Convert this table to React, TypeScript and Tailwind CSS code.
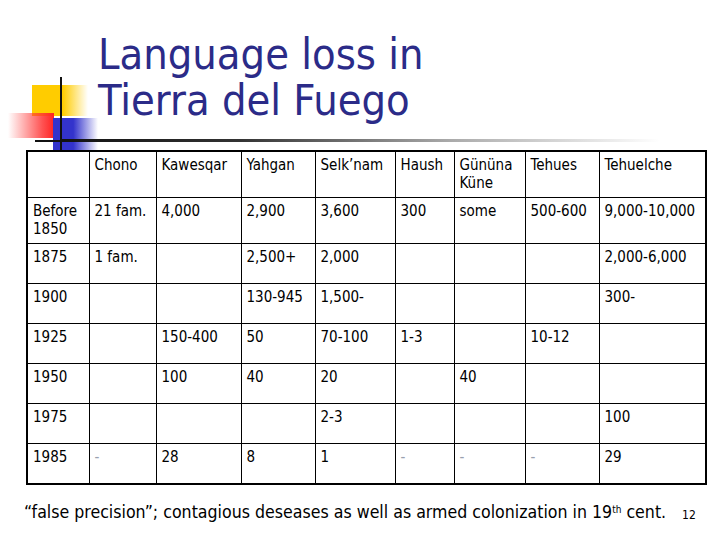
import React from "react";

const cols = [62, 67, 85, 74, 80, 59, 71, 74, 107];

const header = ["", "Chono", "Kawesqar", "Yahgan", "Selk’nam", "Haush", "Gününa Küne", "Tehues", "Tehuelche"];

const rows: { h: number; cells: string[] }[] = [
  { h: 46, cells: ["Before 1850", "21 fam.", "4,000", "2,900", "3,600", "300", "some", "500-600", "9,000-10,000"] },
  { h: 40, cells: ["1875", "1 fam.", "", "2,500+", "2,000", "", "", "", "2,000-6,000"] },
  { h: 40, cells: ["1900", "", "", "130-945", "1,500-", "", "", "", "300-"] },
  { h: 40, cells: ["1925", "", "150-400", "50", "70-100", "1-3", "", "10-12", ""] },
  { h: 40, cells: ["1950", "", "100", "40", "20", "", "40", "", ""] },
  { h: 40, cells: ["1975", "", "", "", "2-3", "", "", "", "100"] },
  { h: 41, cells: ["1985", "-", "28", "8", "1", "-", "-", "-", "29"] },
];

function Logo() {
  return (
    <svg className="absolute left-0 top-0" width="720" height="160" viewBox="0 0 720 160">
      <defs>
        <linearGradient id="yel" x1="0" x2="1" y1="0" y2="0">
          <stop offset="0" stopColor="#ffcc00" />
          <stop offset="0.55" stopColor="#ffcc00" />
          <stop offset="1" stopColor="#ffcc00" stopOpacity="0" />
        </linearGradient>
        <linearGradient id="red" x1="0" x2="1" y1="0" y2="0">
          <stop offset="0" stopColor="#ff3333" stopOpacity="0" />
          <stop offset="0.75" stopColor="#ff3333" stopOpacity="0.85" />
          <stop offset="1" stopColor="#ff2222" />
        </linearGradient>
        <linearGradient id="blu" x1="0" x2="1" y1="0" y2="0">
          <stop offset="0" stopColor="#3333cc" />
          <stop offset="0.45" stopColor="#3333cc" />
          <stop offset="1" stopColor="#3333cc" stopOpacity="0" />
        </linearGradient>
        <linearGradient id="rule" x1="0" x2="1" y1="0" y2="0">
          <stop offset="0" stopColor="#111111" />
          <stop offset="0.3" stopColor="#333333" />
          <stop offset="0.65" stopColor="#aaaaaa" />
          <stop offset="1" stopColor="#ffffff" />
        </linearGradient>
      </defs>
      <rect x="32" y="85" width="56" height="31" fill="url(#yel)" />
      <rect x="8" y="113" width="46" height="25" fill="url(#red)" />
      <rect x="53" y="118" width="45" height="32" fill="url(#blu)" />
      <rect x="60" y="77" width="2" height="75" fill="#111111" />
      <rect x="35" y="140" width="30" height="2" fill="#111111" />
      <rect x="60" y="139" width="600" height="3" fill="url(#rule)" />
    </svg>
  );
}

export default function App() {
  return (
    <div className="relative w-[720px] h-[540px] overflow-hidden bg-white font-['DejaVu_Sans_Condensed','DejaVu_Sans',sans-serif] [font-stretch:condensed]">
      <Logo />
      <div className="relative pl-[98px] pt-[31px]">
        <h1 className="text-[43px] leading-[46px] text-[#2b2b88] font-normal">
          Language loss in
          <br />
          Tierra del Fuego
        </h1>
      </div>
      <div className="relative pl-[26px] mt-[27px]">
        <table className="border-collapse border-2 border-black table-fixed text-[15px] leading-[18px] text-black">
          <colgroup>
            {cols.map((w, i) => (
              <col key={i} style={{ width: w }} />
            ))}
          </colgroup>
          <tbody>
            <tr className="h-[46px]">
              {header.map((t, i) => (
                <td key={i} className="border border-black align-top pl-[5px] pr-[2px] pt-[4px]">
                  {t}
                </td>
              ))}
            </tr>
            {rows.map((r, ri) => (
              <tr key={ri} style={{ height: r.h }}>
                {r.cells.map((t, i) => (
                  <td
                    key={i}
                    className={
                      "border border-black align-top pl-[5px] pr-[2px] pt-[4px] " +
                      (t === "-" ? "text-gray-400" : "")
                    }
                  >
                    {t}
                  </td>
                ))}
              </tr>
            ))}
          </tbody>
        </table>
      </div>
      <div className="relative flex items-end pl-[24px] mt-[17px]">
        <p className="text-[17.6px] leading-[20px] text-black">
          “false precision”; contagious deseases as well as armed colonization in 19
          <sup className="text-[10px]">th</sup> cent.
        </p>
        <span className="ml-[16px] text-[12px] leading-[14px] text-black">12</span>
      </div>
    </div>
  );
}
